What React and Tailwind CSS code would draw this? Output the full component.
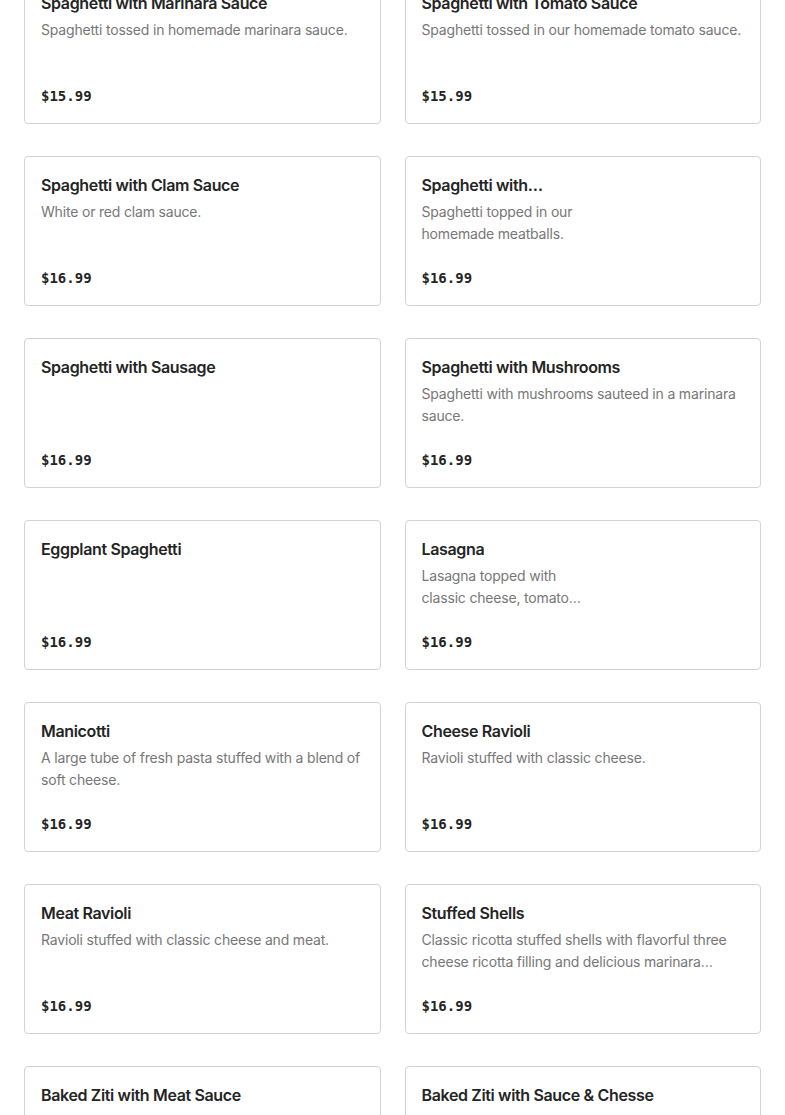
const ITEMS = [
  { name: 'Spaghetti with Marinara Sauce', desc: 'Spaghetti tossed in homemade marinara sauce.', price: '$15.99' },
  { name: 'Spaghetti with Tomato Sauce', desc: 'Spaghetti tossed in our homemade tomato sauce.', price: '$15.99' },
  { name: 'Spaghetti with Clam Sauce', desc: 'White or red clam sauce.', price: '$16.99' },
  { name: 'Spaghetti with Meatballs', desc: 'Spaghetti topped in our homemade meatballs.', price: '$16.99', image: true },
  { name: 'Spaghetti with Sausage', desc: '', price: '$16.99' },
  { name: 'Spaghetti with Mushrooms', desc: 'Spaghetti with mushrooms sauteed in a marinara sauce.', price: '$16.99' },
  { name: 'Eggplant Spaghetti', desc: '', price: '$16.99' },
  { name: 'Lasagna', desc: 'Lasagna topped with classic cheese, tomato sauce, and meat.', price: '$16.99', image: true },
  { name: 'Manicotti', desc: 'A large tube of fresh pasta stuffed with a blend of soft cheese.', price: '$16.99' },
  { name: 'Cheese Ravioli', desc: 'Ravioli stuffed with classic cheese.', price: '$16.99' },
  { name: 'Meat Ravioli', desc: 'Ravioli stuffed with classic cheese and meat.', price: '$16.99' },
  { name: 'Stuffed Shells', desc: 'Classic ricotta stuffed shells with flavorful three cheese ricotta filling and delicious marinara sauce.', price: '$16.99' },
  { name: 'Baked Ziti with Meat Sauce', desc: 'Baked ziti with meat sauce and melted cheese.', price: '$16.99' },
  { name: 'Baked Ziti with Sauce & Chesse', desc: 'Baked ziti with sauce and melted cheese.', price: '$16.99' },
];

function MenuCard({ item }) {
  return (
    <div className="h-[150px] rounded border border-[#d3d3d3] bg-white p-4 flex gap-4">
      <div className={`flex flex-col ${item.image ? 'w-[172px]' : 'flex-1'} min-w-0`}>
        <h3 className="text-[16px] leading-6 font-semibold tracking-[-0.35px] text-[#242424] line-clamp-1">
          {item.name}
        </h3>
        {item.desc && (
          <p className="mt-1 text-[14px] leading-[22px] tracking-[-0.18px] text-[#777777] line-clamp-2">{item.desc}</p>
        )}
        <p className="mt-auto mb-[1px] font-['DejaVu_Sans_Mono',monospace] font-bold text-[14px] leading-5 text-[#242424]">
          {item.price}
        </p>
      </div>
      {item.image && <div className="flex-1" />}
    </div>
  );
}

export default function App() {
  return (
    <div className="h-[1115px] overflow-hidden bg-white font-['Inter',sans-serif]">
      <div className="-mt-[26px] px-6 grid grid-cols-2 gap-x-6 gap-y-8">
        {ITEMS.map((item) => (
          <MenuCard key={item.name} item={item} />
        ))}
      </div>
    </div>
  );
}
